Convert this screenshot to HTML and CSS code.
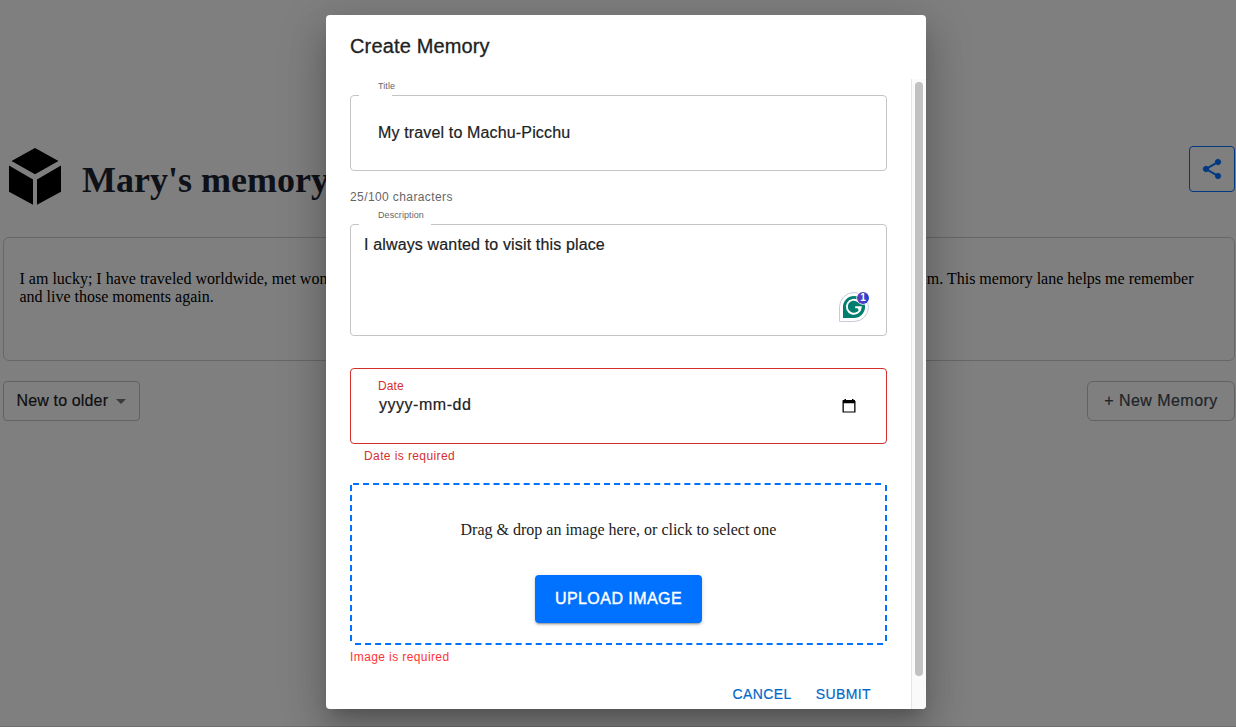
FILE: index.html
```html
<!DOCTYPE html>
<html lang="en">
<head>
<meta charset="utf-8">
<title>Mary's memory lane</title>
<link rel="stylesheet" href="styles.css">
</head>
<body>
<main class="page">
  <header class="page-header">
    <svg class="logo" width="54" height="58" viewBox="0 0 54 58"><path d="M27 0 50.5 13 27 26.2 3.5 13Z"/><path d="M1 17.5 25 31.5V56.7L1 43.7Z"/><path d="M53 17.5 29 31.5V56.7L53 43.7Z"/></svg>
    <h1 class="page-title">Mary's memory</h1>
    <button class="share"><svg width="24" height="24" viewBox="0 0 24 24"><path fill="currentColor" stroke="currentColor" stroke-width=".3" d="M18 16.08c-.76 0-1.44.3-1.96.77L8.91 12.7c.05-.23.09-.46.09-.7s-.04-.47-.09-.7l7.05-4.11c.54.5 1.25.81 2.04.81 1.66 0 3-1.34 3-3s-1.34-3-3-3-3 1.34-3 3c0 .24.04.47.09.7L8.04 9.81C7.5 9.31 6.79 9 6 9c-1.66 0-3 1.34-3 3s1.34 3 3 3c.79 0 1.5-.31 2.04-.81l7.12 4.16c-.05.21-.08.43-.08.65 0 1.61 1.31 2.92 2.92 2.92s2.92-1.31 2.92-2.92-1.31-2.92-2.92-2.92z"/></svg></button>
  </header>
  <section class="intro">
    <div class="intro-line"><span>I am lucky; I have traveled worldwide, met won</span><span>m. This memory lane helps me remember</span></div>
    <div class="intro-line">and live those moments again.</div>
  </section>
  <div class="toolbar">
    <button class="sort">New to older<span class="caret"></span></button>
    <button class="new-memory">+ New Memory</button>
  </div>
</main>
<div class="backdrop">
  <div class="dialog">
    <h2 class="dialog-title">Create Memory</h2>
    <div class="dialog-main">
      <form class="form">
        <fieldset class="field title-field"><legend class="notch notch-title"></legend><label class="label">Title</label><div class="value">My travel to Machu-Picchu</div></fieldset>
        <div class="counter">25/100 characters</div>
        <fieldset class="field desc-field"><legend class="notch notch-desc"></legend><label class="label">Description</label><div class="value">I always wanted to visit this place</div>
          <div class="assistant"><svg width="30" height="30" viewBox="0 0 30 30">
            <defs><linearGradient id="count-fill" x1="0" x2="1"><stop offset="0" stop-color="#6f35b5"/><stop offset="1" stop-color="#1648d8"/></linearGradient></defs>
            <path d="M.5 29.5V15A14.5 14.5 0 1 1 15 29.5Z" fill="#fff" stroke="#c9cad8"/>
            <path d="M4 26V15A11 11 0 1 1 15 26Z" fill="#027e6f"/>
            <path d="M19.5 9.6A7 7 0 1 0 21.8 15.2H16.2M21.7 15.2 19.3 17.6" fill="none" stroke="#fff" stroke-width="1.9"/>
            <circle cx="24" cy="6" r="6.7" fill="#fff"/><circle cx="24" cy="6" r="6" fill="url(#count-fill)"/>
          </svg><span class="count">1</span></div>
        </fieldset>
        <div class="field date-field"><label class="date-label">Date</label><div class="date-row"><span>yyyy-mm-dd</span>
          <svg width="14" height="14" viewBox="0 0 14 14"><path d="M2.5 0H4v1h6V0h1.5v1H13v1l.5 0V13.5H.5V1.5L1 1h1.5ZM1.8 4.2V12.5H12.2V4.2Z" fill="#000" fill-rule="evenodd"/></svg></div></div>
        <div class="date-error">Date is required</div>
        <div class="dropzone"><svg class="dashes" width="537" height="162"><path d="M3 1H535" stroke-dasharray="6 4.04"/><path d="M5 161H537" stroke-dasharray="6 4.04"/><path d="M1 2V162" stroke-dasharray="6 4"/><path d="M536 2V162" stroke-dasharray="6 4"/></svg>
          <p class="drop-text">Drag &amp; drop an image here, or click to select one</p>
          <button type="button" class="upload">UPLOAD IMAGE</button>
        </div>
        <div class="image-error">Image is required</div>
        <div class="actions"><button type="button" class="action">CANCEL</button><button type="button" class="action">SUBMIT</button></div>
      </form>
      <div class="scrollbar"><div class="thumb"></div></div>
    </div>
  </div>
</div>
</body>
</html>
```
FILE: styles.css
```css
* { box-sizing: border-box; }
body { margin: 0; height: 727px; overflow: hidden; background: #fff; font-family: "Liberation Sans", Arial, sans-serif; }
button { font-family: inherit; background: none; margin: 0; padding: 0; white-space: nowrap; }
.page { width: 1236px; height: 727px; padding: 146px 1px 0 3px; border-bottom: 1px solid #ddd; }
.page-header { display: flex; height: 91px; }
.logo { margin: 2px 0 0 5px; }
.page-title { margin: 12px 0 0 20px; font: bold 36px/44px "Liberation Serif", "Times New Roman", serif; color: #1c2430; white-space: nowrap; }
.share { width: 46px; height: 46px; margin-left: auto; border: 1px solid #0072ff; border-radius: 4px; color: #0072ff; display: flex; align-items: center; justify-content: center; }
.intro { height: 124px; border: 1px solid #cfcfcf; border-radius: 6px; padding: 32px 40.5px 0 15.5px; font: 16px/18px "Liberation Serif", "Times New Roman", serif; color: #000; }
.intro-line { display: flex; justify-content: space-between; white-space: nowrap; }
.toolbar { display: flex; justify-content: space-between; margin-top: 20px; }
.sort, .new-memory { height: 40px; border: 1px solid #c4c4c4; border-radius: 4px; font-size: 16px; letter-spacing: .15px; color: #212121; -webkit-text-stroke: .2px; }
.sort { width: 137px; padding-left: 12.5px; display: flex; align-items: center; }
.caret { margin: 1px 0 0 7.5px; border: 5px solid transparent; border-top-color: #757575; border-bottom: 0; }
.new-memory { width: 148px; border-radius: 6px; color: #3f4852; letter-spacing: .45px; }
.backdrop { position: absolute; inset: 0; padding: 15px 0 0 326px; background: rgba(0,0,0,.5); }
.dialog { width: 600px; height: 694px; overflow: hidden; background: #fff; border-radius: 4px; color: #212121; box-shadow: 0 11px 15px -7px rgba(0,0,0,.2), 0 24px 38px 3px rgba(0,0,0,.14), 0 9px 46px 8px rgba(0,0,0,.12); }
.dialog-title { margin: 0; height: 64px; padding: 15px 24px; font-size: 20px; font-weight: 400; line-height: 32px; letter-spacing: .15px; -webkit-text-stroke: .3px; }
.dialog-main { display: flex; height: 630px; }
.form { width: 585px; padding: 16px 24px 0; }
.field { position: relative; width: 537px; margin: 0; padding: 0; border: 1px solid #c4c4c4; border-radius: 4px; font-size: 16px; letter-spacing: .15px; }
.value, .date-row span { -webkit-text-stroke: .2px; }
.notch { height: 1px; padding: 0; margin-left: 8px; }
.notch-title { width: 33px; }
.notch-desc { width: 72px; }
.label { position: absolute; left: 27px; top: -16px; font-size: 9px; line-height: 12px; letter-spacing: .08px; color: #666; }
.title-field { height: 76px; }
.title-field .value { padding: 25px 27px 0; line-height: 23px; }
.counter { margin-top: 16px; height: 37px; font-size: 12px; line-height: 20px; letter-spacing: .4px; color: #666; }
.desc-field { height: 112px; }
.desc-field .value { padding: 8px 13px 0; line-height: 23px; }
.assistant { position: absolute; right: 17px; bottom: 13px; width: 30px; height: 30px; }
.assistant svg { display: block; }
.count { position: absolute; left: 18px; top: 0; width: 12px; text-align: center; font-size: 10px; font-weight: bold; line-height: 12px; letter-spacing: 0; color: #fff; }
.date-field { height: 76px; margin-top: 32px; border-color: #d32f2f; padding: 9px 30px 0 27px; }
.date-label { display: block; font-size: 12px; line-height: 16px; letter-spacing: .11px; color: #d32f2f; }
.date-row { display: flex; justify-content: space-between; align-items: center; height: 22px; padding-left: 1px; letter-spacing: .53px; }
.date-row svg { margin-top: 1px; }
.date-error { height: 39px; padding: 2px 14px 0; font-size: 12px; line-height: 20px; letter-spacing: .4px; color: #d32f2f; }
.dropzone { position: relative; width: 537px; height: 162px; padding-top: 37px; text-align: center; }
.dashes { position: absolute; inset: 0; fill: none; stroke: #0072ff; stroke-width: 2; }
.drop-text { margin: 0; font: 16px/20px "Liberation Serif", "Times New Roman", serif; }
.upload { display: block; width: 167px; height: 48px; margin: 35px auto 0; border: 0; border-radius: 4px; background: #0072ff; color: #fff; font-size: 16px; letter-spacing: .45px; -webkit-text-stroke: .4px; box-shadow: 0 3px 1px -2px rgba(0,0,0,.2), 0 2px 2px rgba(0,0,0,.14), 0 1px 5px rgba(0,0,0,.12); }
.image-error { height: 32px; padding-top: 2px; font-size: 12px; line-height: 20px; letter-spacing: .4px; color: #f33; }
.actions { display: flex; justify-content: flex-end; gap: 24px; padding-right: 16px; }
.action { border: 0; font-size: 14px; line-height: 34px; letter-spacing: .4px; color: #0069c8; -webkit-text-stroke: .2px; }
.scrollbar { width: 15px; height: 630px; padding: 3px; background: #fafafa; border-left: 1px solid #e6e6e6; }
.thumb { width: 8px; height: 594px; border-radius: 4px; background: #c1c1c1; }
```
